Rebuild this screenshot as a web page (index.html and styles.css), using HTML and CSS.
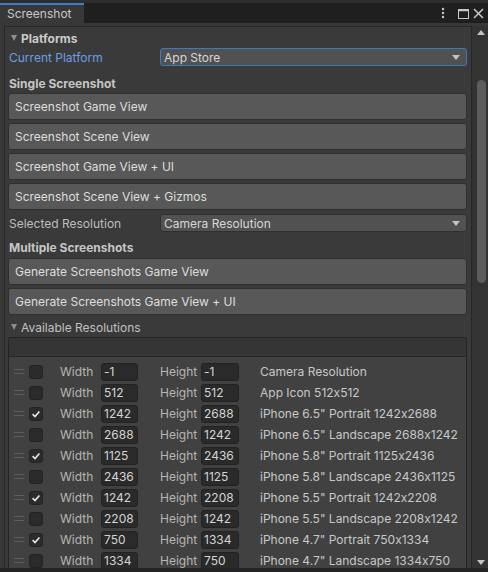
FILE: index.html
```html
<!DOCTYPE html>
<html>
<head>
<meta charset="utf-8">
<link rel="stylesheet" href="styles.css">
</head>
<body>
<div class="window">
  <div class="tabbar">
    <div class="tab">Screenshot</div>
    <svg class="tab-controls" width="50" height="20" viewBox="0 0 50 20">
      <circle cx="5" cy="6" r="1.2" fill="#c8c8c8"/>
      <circle cx="5" cy="10" r="1.2" fill="#c8c8c8"/>
      <circle cx="5" cy="14" r="1.2" fill="#c8c8c8"/>
      <rect x="20.5" y="6.5" width="10" height="9" fill="none" stroke="#c8c8c8" stroke-width="1"/>
      <line x1="20.5" y1="7.5" x2="30.5" y2="7.5" stroke="#c8c8c8" stroke-width="1.5"/>
      <path d="M36 6 L45 15 M45 6 L36 15" stroke="#c8c8c8" stroke-width="1.5" fill="none"/>
    </svg>
  </div>
  <div class="main">
    <div class="panel">
      <div class="foldout bold"><span class="tri"></span>Platforms</div>
      <div class="field-row">
        <span class="field-label focus">Current Platform</span>
        <div class="popup focused">App Store<span class="arrow"></span></div>
      </div>
      <div class="section single">Single Screenshot</div>
      <div class="btn first">Screenshot Game View</div>
      <div class="btn">Screenshot Scene View</div>
      <div class="btn">Screenshot Game View + UI</div>
      <div class="btn">Screenshot Scene View + Gizmos</div>
      <div class="field-row sel">
        <span class="field-label">Selected Resolution</span>
        <div class="popup">Camera Resolution<span class="arrow"></span></div>
      </div>
      <div class="section multi">Multiple Screenshots</div>
      <div class="btn first-multi">Generate Screenshots Game View</div>
      <div class="btn">Generate Screenshots Game View + UI</div>
      <div class="foldout avail"><span class="tri"></span>Available Resolutions</div>
      <div class="list">
        <div class="list-header"></div>
        <div class="list-body">
          <div class="row"><span class="handle"></span><span class="check"></span><span class="lbl">Width</span><span class="num">-1</span><span class="lbl h">Height</span><span class="num hnum">-1</span><span class="desc">Camera Resolution</span></div>
          <div class="row"><span class="handle"></span><span class="check"></span><span class="lbl">Width</span><span class="num">512</span><span class="lbl h">Height</span><span class="num hnum">512</span><span class="desc">App Icon 512x512</span></div>
          <div class="row"><span class="handle"></span><span class="check"><svg width="12" height="12" viewBox="0 0 12 12"><path d="M2.6 6.2 L5 8.5 L9.4 3.4" stroke="#e8e8e8" stroke-width="1.6" fill="none"/></svg></span><span class="lbl">Width</span><span class="num">1242</span><span class="lbl h">Height</span><span class="num hnum">2688</span><span class="desc">iPhone 6.5" Portrait 1242x2688</span></div>
          <div class="row"><span class="handle"></span><span class="check"></span><span class="lbl">Width</span><span class="num">2688</span><span class="lbl h">Height</span><span class="num hnum">1242</span><span class="desc">iPhone 6.5" Landscape 2688x1242</span></div>
          <div class="row"><span class="handle"></span><span class="check"><svg width="12" height="12" viewBox="0 0 12 12"><path d="M2.6 6.2 L5 8.5 L9.4 3.4" stroke="#e8e8e8" stroke-width="1.6" fill="none"/></svg></span><span class="lbl">Width</span><span class="num">1125</span><span class="lbl h">Height</span><span class="num hnum">2436</span><span class="desc">iPhone 5.8" Portrait 1125x2436</span></div>
          <div class="row"><span class="handle"></span><span class="check"></span><span class="lbl">Width</span><span class="num">2436</span><span class="lbl h">Height</span><span class="num hnum">1125</span><span class="desc">iPhone 5.8" Landscape 2436x1125</span></div>
          <div class="row"><span class="handle"></span><span class="check"><svg width="12" height="12" viewBox="0 0 12 12"><path d="M2.6 6.2 L5 8.5 L9.4 3.4" stroke="#e8e8e8" stroke-width="1.6" fill="none"/></svg></span><span class="lbl">Width</span><span class="num">1242</span><span class="lbl h">Height</span><span class="num hnum">2208</span><span class="desc">iPhone 5.5" Portrait 1242x2208</span></div>
          <div class="row"><span class="handle"></span><span class="check"></span><span class="lbl">Width</span><span class="num">2208</span><span class="lbl h">Height</span><span class="num hnum">1242</span><span class="desc">iPhone 5.5" Landscape 2208x1242</span></div>
          <div class="row"><span class="handle"></span><span class="check"><svg width="12" height="12" viewBox="0 0 12 12"><path d="M2.6 6.2 L5 8.5 L9.4 3.4" stroke="#e8e8e8" stroke-width="1.6" fill="none"/></svg></span><span class="lbl">Width</span><span class="num">750</span><span class="lbl h">Height</span><span class="num hnum">1334</span><span class="desc">iPhone 4.7" Portrait 750x1334</span></div>
          <div class="row"><span class="handle"></span><span class="check"></span><span class="lbl">Width</span><span class="num">1334</span><span class="lbl h">Height</span><span class="num hnum">750</span><span class="desc">iPhone 4.7" Landscape 1334x750</span></div>
        </div>
      </div>
    </div>
    <div class="scrollbar">
      <div class="sb-btn"><span class="sb-up"></span></div>
      <div class="sb-track"><div class="sb-thumb"></div></div>
      <div class="sb-btn"><span class="sb-down"></span></div>
    </div>
  </div>
</div>
</body>
</html>
```
FILE: styles.css
```css
* { box-sizing: border-box; }
html, body { margin: 0; padding: 0; }
body {
  width: 488px;
  height: 572px;
  overflow: hidden;
  background: #242424;
  font-family: Inter, "Noto Sans", sans-serif;
  font-size: 12px;
  font-feature-settings: "calt" 0;
  font-variant-ligatures: no-contextual;
  color: #c4c4c4;
}
.window {
  width: 488px;
  height: 568px;
  display: flex;
  flex-direction: column;
  background: #383838;
  overflow: hidden;
}
.tabbar {
  height: 23px;
  flex: none;
  display: flex;
  background: #1f1f1f;
  border-top: 3px solid #2d2d2d;
}
.tab {
  width: 84px;
  background: #383838;
  border-top: 2px solid #3f7ccb;
  padding-left: 7px;
  line-height: 18px;
  color: #c8c8c8;
}
.tab-controls { margin-left: auto; display: block; }
.main {
  flex: 1;
  min-height: 0;
  display: flex;
  padding-top: 3px;
}
.panel {
  margin-left: 4px;
  width: 468px;
  border: 1px solid #262626;
  border-bottom: none;
  background: #3a3a3a;
  padding: 2px 4px 0 3px;
  overflow: hidden;
}
.foldout {
  height: 18px;
  display: flex;
  align-items: center;
}
.foldout.bold { font-weight: 700; color: #cacaca; }
.tri {
  width: 0;
  height: 0;
  margin-left: 3px;
  margin-right: 4px;
  border-left: 3.5px solid transparent;
  border-right: 3.5px solid transparent;
  border-top: 6px solid #8e8e8e;
}
.avail { margin-top: 3px; color: #c0c0c0; }
.field-row {
  display: flex;
  align-items: center;
  height: 18px;
  margin-top: 1px;
}
.field-row.sel { margin-top: 4px; }
.field-label { width: 152px; padding-left: 1px; color: #bdbdbd; }
.field-label.focus { color: #6f9de2; }
.popup {
  flex: 1;
  height: 18px;
  display: flex;
  align-items: center;
  background: #515151;
  border: 1px solid #303030;
  border-radius: 3px;
  padding-left: 3px;
  color: #d6d6d6;
}
.popup.focused { border-color: #3d78c2; }
.arrow {
  margin-left: auto;
  margin-right: 6px;
  width: 0;
  height: 0;
  border-left: 4px solid transparent;
  border-right: 4px solid transparent;
  border-top: 5px solid #c4c4c4;
}
.section {
  height: 18px;
  line-height: 18px;
  font-weight: 700;
  padding-left: 1px;
  color: #c6c6c6;
}
.section.single { margin-top: 9px; }
.section.multi { margin-top: 7px; }
.btn {
  height: 27px;
  display: flex;
  align-items: center;
  margin-top: 3px;
  padding-left: 6px;
  background: #585858;
  border: 1px solid #2f2f2f;
  border-radius: 3px;
  color: #dedede;
}
.btn.first { margin-top: 0; }
.btn.first-multi { margin-top: 1px; }
.list {
  margin-top: 1px;
  border: 1px solid #242424;
  border-bottom: none;
  border-radius: 3px 3px 0 0;
  overflow: hidden;
}
.list-header {
  height: 19px;
  background: #353535;
  border-bottom: 1px solid #262626;
}
.list-body {
  background: #414141;
  padding-top: 4px;
}
.row {
  height: 21px;
  display: flex;
  align-items: center;
}
.handle {
  margin-left: 5px;
  width: 10px;
  height: 5px;
  border-top: 1px solid #5d5d5d;
  border-bottom: 1px solid #5d5d5d;
}
.check {
  margin-left: 5px;
  width: 14px;
  height: 14px;
  background: #2b2b2b;
  border: 1px solid #232323;
  border-radius: 3px;
  display: flex;
}
.lbl { margin-left: 17px; width: 41px; color: #b6b6b6; }
.lbl.h { margin-left: 22px; }
.num {
  width: 37px;
  height: 18px;
  line-height: 16px;
  background: #2a2a2a;
  border: 1px solid #222222;
  border-radius: 3px;
  padding-left: 2px;
  color: #d4d4d4;
}
.num.hnum { width: 38px; }
.desc { margin-left: 21px; color: #c8c8c8; white-space: nowrap; }
.scrollbar {
  width: 16px;
  display: flex;
  flex-direction: column;
  background: #333333;
}
.sb-btn {
  height: 12px;
  display: flex;
  align-items: center;
  justify-content: center;
  padding-left: 2px;
}
.sb-up, .sb-down {
  width: 0;
  height: 0;
  border-left: 4px solid transparent;
  border-right: 4px solid transparent;
}
.sb-up { border-bottom: 5px solid #c4c4c4; }
.sb-down { border-top: 5px solid #c4c4c4; }
.sb-track { flex: 1; padding-top: 42px; }
.sb-thumb {
  margin-left: 5px;
  width: 9px;
  height: 203px;
  background: #5c5c5c;
  border-radius: 5px;
}
```
